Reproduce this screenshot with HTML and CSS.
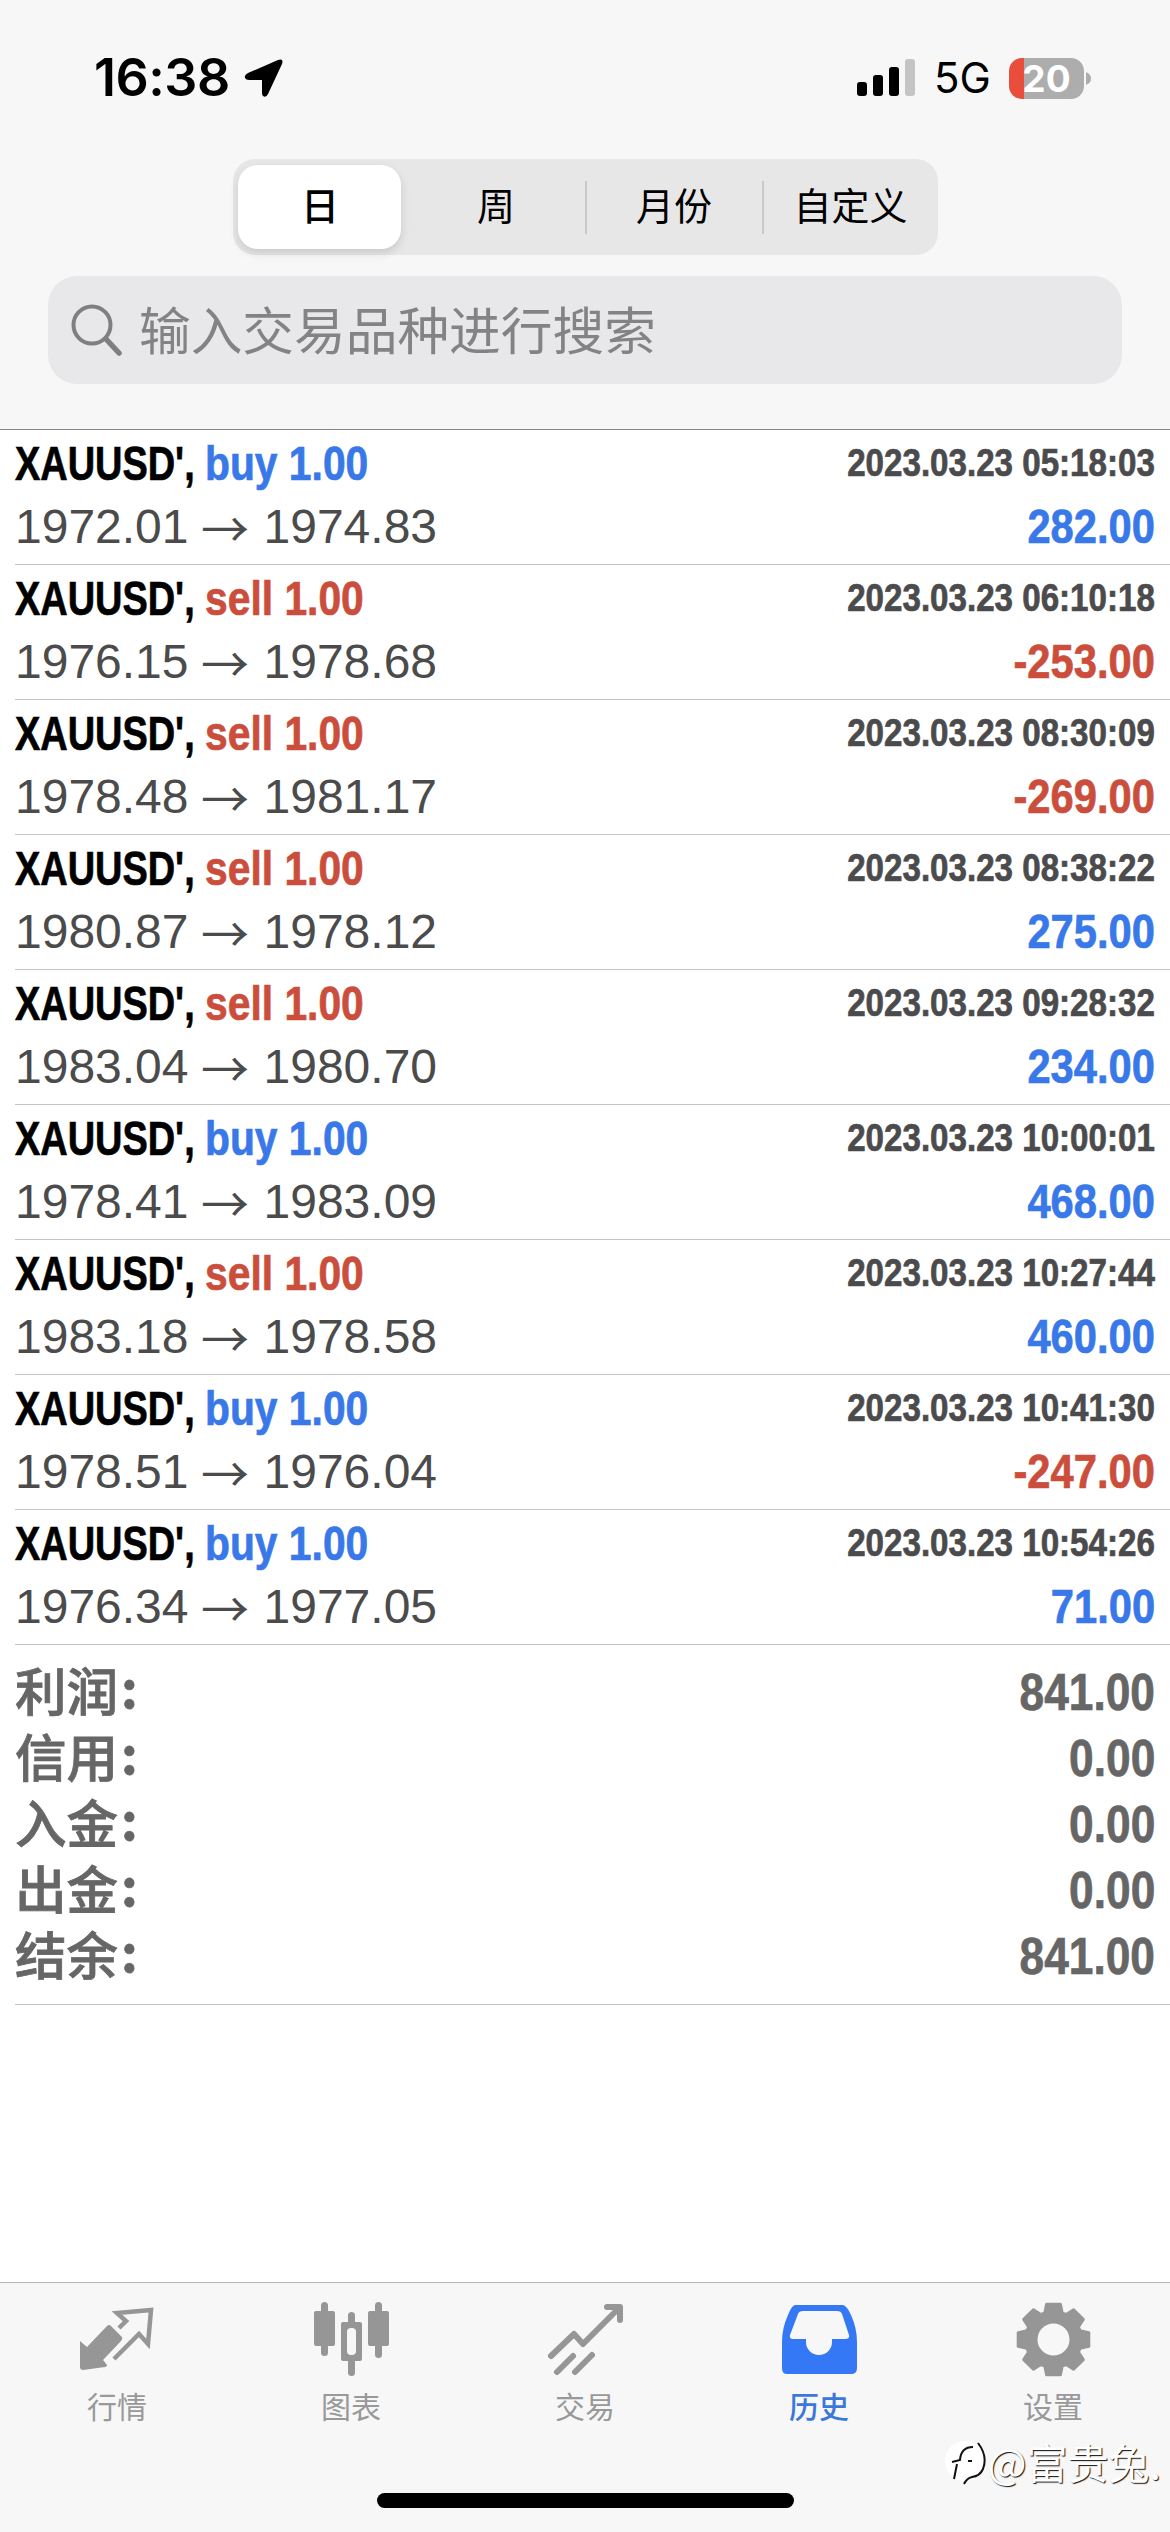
FILE: index.html
```
<!DOCTYPE html>
<html lang="zh-CN">
<head>
<meta charset="utf-8">
<title>历史</title>
<link rel="stylesheet" href="styles.css">
</head>
<body>
<div class="screen">
  <header class="top">
    <div class="status">
      <div class="clock"><span class="time">16:38</span>
        <svg class="location" width="40" height="40" viewBox="0 0 40 40"><path d="M4 15 L34 2 Q40 0 38 6 L24 36 Q22 40 19 38 Q18 37 18 35 L18 22 L5 22 Q2 22 1 20 Q0 17 4 15Z"/></svg>
      </div>
      <div class="system">
        <svg class="signal" width="58" height="38" viewBox="0 0 58 38"><rect y="23" width="10" height="14" rx="3"/><rect x="16" y="16" width="10" height="21" rx="3"/><rect x="32" y="8" width="10" height="29" rx="3"/><rect x="48" width="10" height="37" rx="3" fill="#c4c4c4"/></svg>
        <span class="network">5G</span>
        <div class="battery"><div class="cell">20</div><svg width="5" height="13" viewBox="0 0 5 13"><path d="M0 0Q5 2 5 6.500Q5 11 0 13Z" fill="#adadad"/></svg></div>
      </div>
    </div>
    <nav class="segments">
      <span class="segment selected">日</span><span class="segment">周</span><span class="segment divided">月份</span><span class="segment divided">自定义</span>
    </nav>
    <div class="search">
      <svg width="54" height="54" viewBox="0 0 54 54" fill="none" stroke="#7f7f83" stroke-linecap="round"><circle cx="21" cy="22" r="18.500" stroke-width="4"/><path d="M35 36L48 50" stroke-width="5.500"/></svg>
      <span>输入交易品种进行搜索</span>
    </div>
  </header>
  <main class="history" id="history"></main>
  <section class="summary">
    <div class="total"><span class="label">利润<i>:</i></span><b class="amount">841.00</b></div>
    <div class="total"><span class="label">信用<i>:</i></span><b class="amount">0.00</b></div>
    <div class="total"><span class="label">入金<i>:</i></span><b class="amount">0.00</b></div>
    <div class="total"><span class="label">出金<i>:</i></span><b class="amount">0.00</b></div>
    <div class="total"><span class="label">结余<i>:</i></span><b class="amount">841.00</b></div>
  </section>
  <footer class="bottom">
    <nav class="tabs">
      <div class="tab"><svg viewBox="0 0 76 76"><path d="M1 35L8 41L28 20Q30 18 32 20L43 31Q44 33 42 35L24 54L28 59Q28 61 26 61L4 64Q1 64 1 61Z" fill="#969696"/><path d="M40 22L47 15L38 7L72 4L69 38L60 28L35 53" fill="none" stroke="#969696" stroke-width="4.500"/></svg>行情</div>
      <div class="tab"><svg viewBox="0 0 76 76" fill="#969696"><rect x="8" y="-4" width="7" height="54" rx="3.500"/><rect x="1" y="5" width="21" height="35" rx="2"/><rect x="62" y="-4" width="7" height="56" rx="3.500"/><rect x="55" y="5" width="21" height="35" rx="2"/><rect x="35" y="6" width="7" height="64" rx="3.500"/><rect x="28" y="16" width="21" height="39" rx="2"/><rect x="34" y="22" width="9" height="27" rx="4" fill="#f7f7f7"/></svg>图表</div>
      <div class="tab"><svg viewBox="0 0 76 76" fill="none" stroke="#969696" stroke-width="6" stroke-linecap="round" stroke-linejoin="round"><path d="M4 50L27 28L36 38L71 3M60 1H73V14"/><path d="M10 66L26 50M28 66L45 49"/></svg>交易</div>
      <div class="tab active"><svg viewBox="0 0 76 76"><path fill-rule="evenodd" d="M14 -1H62Q66 0 70 9Q76 22 76 36V62Q76 68 70 68H6Q1 68 1 62V36Q1 22 7 9Q11 -1 14 -1ZM22 5Q18 5 17 8L9 29Q8 33 12 33H25V36A13 13 0 0 0 51 36V33H64Q69 33 68 29L61 8Q60 5 56 5Z" fill="#3478f6"/></svg>历史</div>
      <div class="tab"><svg id="gear" viewBox="0 0 76 76"></svg>设置</div>
    </nav>
    <div class="home"></div>
    <div class="watermark"><svg width="44" height="50" viewBox="0 0 44 50"><circle cx="22" cy="25" r="20" fill="#fff"/><path d="M9 26L17 24Q18 11 30 11M14 28L11 43M25 25H29" fill="none" stroke="#111" stroke-width="2"/><path d="M35 7Q45 20 40 33Q37 40 29 41Q24 42 21 48" fill="none" stroke="#111" stroke-width="2"/></svg><span>@富贵兔.</span></div>
  </footer>
</div>
<script src="app.js"></script>
</body>
</html>
```
FILE: styles.css
```
* { box-sizing: border-box; }
body { margin: 0; background: #fff; font-family: "Liberation Sans", "Noto Sans CJK SC", sans-serif; }
.screen { width: 1170px; height: 2532px; display: flex; flex-direction: column; overflow: hidden; }
.top { height: 430px; flex: none; background: #f7f7f7; border-bottom: 1px solid #888; display: flex; flex-direction: column; align-items: center; }
.status { width: 100%; height: 159px; padding: 53px 79px 0 94px; display: flex; justify-content: space-between; }
.clock, .system, .battery { display: flex; align-items: center; }
.clock, .system { height: 50px; }
.time { width: 150px; font: 600 52px/50px Inter, sans-serif; letter-spacing: -0.5px; }
.network { width: 75px; margin-left: 19px; font: 400 42px/50px Inter, sans-serif; }
.cell { width: 75px; height: 41px; border-radius: 13px; background: linear-gradient(90deg, #e94e3d 15px, #adadad 15px); color: #fff; font: 700 37px/41px Inter, sans-serif; text-align: center; }
.battery svg { margin-left: 2px; }
.segments { width: 705px; height: 96px; border-radius: 22px; background: #e7e7e8; display: grid; grid-template-columns: 173px 1fr 177px 176px; }
.segment { display: flex; align-items: center; justify-content: center; padding: 0 0 6px 2px; font: 400 38px/60px "Noto Sans CJK SC", sans-serif; color: #000; }
.selected { margin: 6px 5px; background: #fff; border-radius: 20px; font-weight: 500; box-shadow: 0 4px 10px rgba(0,0,0,.13); }
.divided { background: linear-gradient(#c9c9cb, #c9c9cb) left center / 2px 53px no-repeat; }
.search { width: 1074px; height: 108px; margin-top: 21px; border-radius: 29px; background: #e8e8ea; display: flex; align-items: center; padding-left: 23px; gap: 14px; color: #838386; font: 400 51.7px/100px "Noto Sans CJK SC", sans-serif; }
.search span { padding-bottom: 4px; }
.history { flex: none; }
.deal { height: 135px; margin-left: 15px; padding-right: 15px; border-bottom: 1px solid #c4c4c6; }
.line { display: flex; justify-content: space-between; height: 63px; line-height: 55px; font-size: 48px; white-space: nowrap; }
.line { padding-top: 6px; }
.name, .when, .amount { -webkit-text-stroke: .7px currentColor; }
.name { display: flex; font-weight: 700; }
.symbol { width: 190px; transform: scaleX(.79); transform-origin: left; }
.side { transform: scaleX(.85); transform-origin: left; }
.when { font-size: 38px; font-weight: 700; color: #4b4b4d; transform: scaleX(.872); transform-origin: right; }
.prices { display: flex; color: #4b4b4b; }
.arrow { width: 75px; text-align: center; font-family: "Noto Sans CJK SC", sans-serif; text-indent: -2px; }
.amount { font-size: 48px; font-weight: 700; transform: scaleX(.868); transform-origin: right; }
.buy, .gain { color: #3878e8; }
.sell, .loss { color: #cb4e3d; }
.summary { flex: none; height: 360px; margin-left: 15px; padding: 15px 15px 0 0; border-bottom: 1px solid #c4c4c6; }
.total { display: flex; justify-content: space-between; height: 66px; color: #666; font: 500 51.5px/58px "Noto Sans CJK SC", sans-serif; }
.label { -webkit-text-stroke: .8px currentColor; }
.total i { font-style: normal; font-weight: 700; margin-left: 3px; vertical-align: 3px; line-height: 1; }
.total .amount { font: 700 51px/66px "Liberation Sans", sans-serif; }
.bottom { position: relative; margin-top: auto; height: 250px; background: #f7f7f7; border-top: 1px solid #b4b4b5; display: flex; flex-direction: column; align-items: center; justify-content: space-between; padding-bottom: 24px; }
.tabs { width: 100%; display: grid; grid-template-columns: repeat(5, 234px); }
.tab { display: flex; flex-direction: column; align-items: center; padding-top: 23px; color: #999; font: 400 30px/44px "Noto Sans CJK SC", sans-serif; }
.tab svg { width: 76px; height: 76px; margin-bottom: 1px; overflow: visible; }
.active { color: #3b77dc; font-weight: 500; }
.home { width: 417px; height: 15px; border-radius: 8px; background: #000; }
.watermark { position: absolute; right: 9px; top: 153px; display: flex; align-items: center; gap: 1px; color: #fff; font: 400 41px/50px "Noto Sans CJK SC", sans-serif; text-shadow: 1px 1px 1px #111; }
```
FILE: app.js
```
const deals = [
  ["buy", "1972.01", "1974.83", "05:18:03", "282.00"],
  ["sell", "1976.15", "1978.68", "06:10:18", "-253.00"],
  ["sell", "1978.48", "1981.17", "08:30:09", "-269.00"],
  ["sell", "1980.87", "1978.12", "08:38:22", "275.00"],
  ["sell", "1983.04", "1980.70", "09:28:32", "234.00"],
  ["buy", "1978.41", "1983.09", "10:00:01", "468.00"],
  ["sell", "1983.18", "1978.58", "10:27:44", "460.00"],
  ["buy", "1978.51", "1976.04", "10:41:30", "-247.00"],
  ["buy", "1976.34", "1977.05", "10:54:26", "71.00"]
];
document.getElementById("history").innerHTML = deals.map(([side, open, close, time, profit]) => `
  <article class="deal">
    <div class="line"><div class="name"><span class="symbol">XAUUSD',</span><span class="side ${side}">${side} 1.00</span></div><span class="when">2023.03.23 ${time}</span></div>
    <div class="line"><div class="prices"><span>${open}</span><span class="arrow">→</span><span>${close}</span></div><span class="amount ${profit[0] === "-" ? "loss" : "gain"}">${profit}</span></div>
  </article>`).join("");

// Eight-toothed gear with rounded corners and a round hub.
const points = [];
for (let i = 0; i < 8; i++) {
  for (const [r, a] of [[28, -18], [36, -11], [36, 11], [28, 18]]) {
    const t = (i * 45 + a) * Math.PI / 180;
    points.push(`${(38.5 + r * Math.sin(t)).toFixed(1)},${(33.5 - r * Math.cos(t)).toFixed(1)}`);
  }
}
document.getElementById("gear").innerHTML = `<polygon points="${points.join(" ")}" fill="#969696" stroke="#969696" stroke-width="3" stroke-linejoin="round"/><circle cx="38.5" cy="33.5" r="16" fill="#f7f7f7"/>`;
```
